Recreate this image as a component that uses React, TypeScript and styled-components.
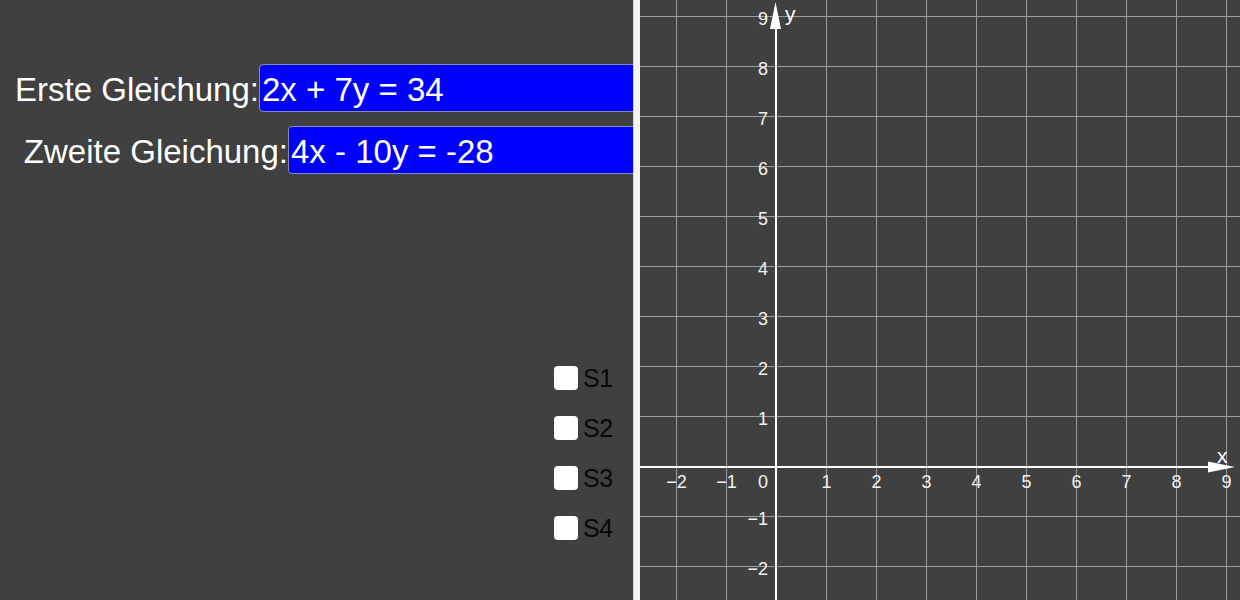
import React from 'react';
import styled, { createGlobalStyle } from 'styled-components';

const GlobalStyle = createGlobalStyle`
  html, body {
    margin: 0;
    padding: 0;
    background: #404040;
    font-family: "Liberation Sans", Arial, sans-serif;
  }
`;

const Page = styled.div`
  display: flex;
  width: 1240px;
  height: 600px;
  overflow: hidden;
  background: #404040;
`;

const AlgebraPanel = styled.div`
  width: 633px;
  flex-shrink: 0;
  display: flex;
  flex-direction: column;
  padding-top: 64px;
  box-sizing: border-box;
  overflow: hidden;
`;

const EquationList = styled.div`
  display: flex;
  flex-direction: column;
  gap: 14px;
`;

const EquationRow = styled.div`
  display: flex;
  align-items: center;
  height: 48px;
`;

const EquationLabel = styled.label<{ $width: number }>`
  width: ${(p) => p.$width}px;
  flex-shrink: 0;
  text-align: right;
  color: #ffffff;
  font-size: 33px;
  line-height: 48px;
  padding-top: 3px;
  white-space: nowrap;
`;

const EquationInput = styled.input`
  flex: 1;
  min-width: 0;
  height: 48px;
  margin: 0 -10px 0 0;
  padding: 3px 0 0 2px;
  box-sizing: border-box;
  border: 1px solid #8a8ab8;
  border-radius: 4px;
  background: #0000ff;
  color: #ffffff;
  font-family: "Liberation Sans", Arial, sans-serif;
  font-size: 33px;
  outline: none;
`;

const CheckList = styled.div`
  display: flex;
  flex-direction: column;
  margin-top: 179px;
  padding-left: 554px;
`;

const CheckRow = styled.label`
  display: flex;
  align-items: center;
  height: 50px;
  gap: 5px;
  cursor: pointer;
`;

const CheckBox = styled.span`
  width: 24px;
  height: 24px;
  border-radius: 4px;
  background: #ffffff;
  flex-shrink: 0;
`;

const CheckText = styled.span`
  color: #080808;
  font-size: 25px;
  line-height: 26px;
  letter-spacing: -0.5px;
`;

const Divider = styled.div`
  width: 7px;
  flex-shrink: 0;
  background: #f4f4f4;
  border-left: 1px solid #d6d6d6;
  box-sizing: border-box;
`;

const GraphView = styled.div`
  flex: 1;
  overflow: hidden;
`;

const GRID = '#9c9c9c';
const OX = 136;
const OY = 467;
const UNIT = 50;

const ticks = [-2, -1, 1, 2, 3, 4, 5, 6, 7, 8, 9];

const fmt = (n: number) => (n < 0 ? `\u2212${-n}` : `${n}`);

const Graph: React.FC = () => (
  <svg width="600" height="600" viewBox="0 0 600 600" style={{ display: 'block' }}>
    {ticks.map((k) => (
      <line key={`v${k}`} x1={OX + k * UNIT + 0.5} y1={0} x2={OX + k * UNIT + 0.5} y2={600} stroke={GRID} strokeWidth={1} />
    ))}
    {ticks.map((k) => (
      <line key={`h${k}`} x1={0} y1={OY - k * UNIT - 0.5} x2={600} y2={OY - k * UNIT - 0.5} stroke={GRID} strokeWidth={1} />
    ))}
    <line x1={0} y1={OY} x2={590} y2={OY} stroke="#ffffff" strokeWidth={2} />
    <line x1={OX} y1={600} x2={OX} y2={10} stroke="#ffffff" strokeWidth={2} />
    <polygon points="595,467 568,461.5 568,472.5" fill="#ffffff" />
    <polygon points="135.5,2 130,29 141,29" fill="#ffffff" />
    <g fill="#f2f2f2" fontFamily='"Liberation Sans", Arial, sans-serif' fontSize="18">
      {ticks.map((k) => (
        <text key={`xl${k}`} x={OX + k * UNIT + 0.5} y={488} textAnchor="middle">
          {fmt(k)}
        </text>
      ))}
      {ticks.map((k) => (
        <text key={`yl${k}`} x={128} y={OY - k * UNIT + 8} textAnchor="end">
          {fmt(k)}
        </text>
      ))}
      <text x={128} y={488} textAnchor="end">
        0
      </text>
    </g>
    <g fill="#ffffff" fontFamily='"Liberation Sans", Arial, sans-serif' fontSize="21">
      <text x={577} y={463}>x</text>
      <text x={145} y={21}>y</text>
    </g>
  </svg>
);

const equations = [
  { label: 'Erste Gleichung:', value: '2x + 7y = 34', width: 259 },
  { label: 'Zweite Gleichung:', value: '4x - 10y = -28', width: 288 },
];

const checks = ['S1', 'S2', 'S3', 'S4'];

const App: React.FC = () => (
  <>
    <GlobalStyle />
    <Page>
      <AlgebraPanel>
        <EquationList>
          {equations.map((eq) => (
            <EquationRow key={eq.label}>
              <EquationLabel $width={eq.width}>{eq.label}</EquationLabel>
              <EquationInput type="text" defaultValue={eq.value} spellCheck={false} />
            </EquationRow>
          ))}
        </EquationList>
        <CheckList>
          {checks.map((c) => (
            <CheckRow key={c}>
              <CheckBox />
              <CheckText>{c}</CheckText>
            </CheckRow>
          ))}
        </CheckList>
      </AlgebraPanel>
      <Divider />
      <GraphView>
        <Graph />
      </GraphView>
    </Page>
  </>
);

export default App;
